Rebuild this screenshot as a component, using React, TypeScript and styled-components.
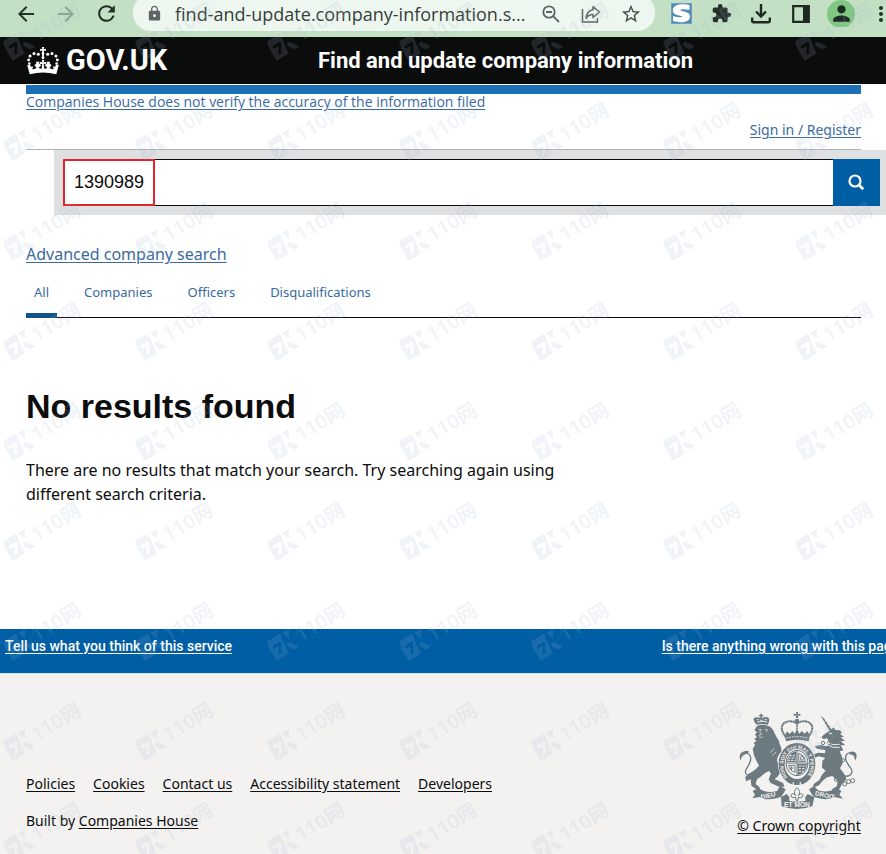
import React from "react";
import styled, { createGlobalStyle } from "styled-components";
import {
  MdArrowBack,
  MdArrowForward,
  MdExtension,
  MdLock,
  MdMoreVert,
  MdPerson,
  MdRefresh,
  MdStarBorder,
} from "react-icons/md";

const GlobalStyle = createGlobalStyle`
  *, *::before, *::after { box-sizing: border-box; }
  body {
    margin: 0;
    background: #ffffff;
    color: #0b0c0c;
    font-family: "Noto Sans", "Open Sans", sans-serif;
  }
`;

const Page = styled.div`
  position: relative;
  display: flex;
  flex-direction: column;
  min-height: 100vh;
  overflow: hidden;
`;

/* Browser toolbar */

const BrowserBar = styled.div`
  display: flex;
  align-items: flex-start;
  height: 37px;
  padding-left: 6px;
  background: #c3e0c4;
  overflow: hidden;
`;

const ToolButton = styled.button<{ $tone?: string }>`
  display: flex;
  flex: none;
  align-items: center;
  justify-content: center;
  width: 40px;
  height: 27px;
  padding: 0;
  border: 0;
  background: none;
  color: ${(p) => p.$tone || "#26302a"};
`;

const AddressBar = styled.div`
  display: flex;
  flex: 1;
  align-items: flex-end;
  height: 37px;
  min-width: 0;
  margin: -6px 6px 0 7px;
  padding: 0 4px 4px 13px;
  border-radius: 18px;
  background: #eef7ef;
`;

const LockIcon = styled.span`
  display: flex;
  align-items: center;
  height: 27px;
  margin-right: 12px;
  color: #5f6368;
`;

const AddressInput = styled.input`
  flex: 1;
  min-width: 0;
  height: 27px;
  padding: 0;
  border: 0;
  outline: 0;
  background: none;
  color: #36403a;
  font: 400 18px "Open Sans", "Noto Sans", sans-serif;
`;

const Extensions = styled.div`
  display: flex;
  flex: none;
  width: 225px;
  overflow: hidden;
`;

const Avatar = styled.span`
  display: flex;
  flex: none;
  align-items: center;
  justify-content: center;
  width: 28px;
  height: 28px;
  border-radius: 50%;
  background: #81c784;
  color: #1d2b22;
`;

/* GOV.UK header */

const GovHeader = styled.header`
  display: flex;
  align-items: center;
  height: 47px;
  padding: 0 26px;
  background: #0b0c0c;
  color: #ffffff;
  font-family: Roboto, sans-serif;
  font-weight: 700;
  white-space: nowrap;
`;

const Brand = styled.a`
  display: flex;
  flex: none;
  align-items: center;
  gap: 6px;
  width: 292px;
  color: inherit;
  font-size: 29px;
  line-height: 47px;
  text-decoration: none;
`;

const ServiceName = styled.a`
  color: inherit;
  font-size: 22px;
  line-height: 47px;
  text-decoration: none;
`;

/* Main content */

const Container = styled.div`
  margin: 0 25px 0 26px;
`;

const AccountBar = styled(Container)`
  margin-top: 1px;
  border-top: 9px solid #1d70b8;
  border-bottom: 1px solid #b1b4b6;
`;

const Link = styled.a`
  color: #3a6a9f;
  text-underline-offset: 2px;
`;

const Notice = styled(Link)`
  display: block;
  font: 400 14px/16px "Open Sans", sans-serif;
`;

const SignIn = styled.div`
  padding: 10px 0 9px;
  font-size: 14px;
  line-height: 20px;
  text-align: right;
`;

const SearchForm = styled.form`
  display: flex;
  margin-left: 54px;
  padding: 9px 6px 9px 9px;
  background: #dee0e2;
`;

const SearchField = styled.div`
  display: grid;
  flex: 1;
`;

const SearchInput = styled.input`
  grid-area: 1 / 1;
  width: 100%;
  height: 47px;
  padding: 0 10px;
  border: 1px solid #0b0c0c;
  border-right: 0;
  border-radius: 0;
  outline: 0;
  background: #ffffff;
  color: #0b0c0c;
  font: 400 18px "Liberation Sans", Arial, sans-serif;
`;

const Highlight = styled.span`
  grid-area: 1 / 1;
  width: 92px;
  border: 2px solid #e0242c;
  pointer-events: none;
`;

const SearchButton = styled.button`
  display: flex;
  align-items: center;
  justify-content: center;
  width: 47px;
  height: 47px;
  padding: 0 2px 2px 0;
  border: 0;
  background: #005ea5;
`;

const Advanced = styled(Link)`
  display: inline-block;
  margin-top: 27px;
  font-size: 16px;
  line-height: 24px;
`;

const Tabs = styled.nav`
  display: flex;
  gap: 19px;
  margin-top: 15px;
  border-bottom: 1px solid #0b0c0c;
`;

const Tab = styled.a<{ $active?: boolean }>`
  margin-bottom: -1px;
  padding: 0 8px 10px;
  border-bottom: 5px solid ${(p) => (p.$active ? "#10548a" : "transparent")};
  color: #3a6a9f;
  font-size: 13px;
  line-height: 22px;
  text-decoration: none;
`;

const Title = styled.h1`
  margin: 68px 0 0;
  font: 700 34px/40px "Liberation Sans", Arial, sans-serif;
`;

const Message = styled.p`
  max-width: 557px;
  margin: 32px 0 123px;
  font-size: 16px;
  line-height: 24px;
`;

/* Feedback strip and footer */

const Feedback = styled.div`
  display: flex;
  justify-content: space-between;
  height: 44px;
  margin-right: -25px;
  padding: 7px 5px;
  background: #005ea5;
`;

const FeedbackLink = styled.a`
  color: #ffffff;
  font: 500 14px/20px Roboto, sans-serif;
  text-underline-offset: 2px;
  white-space: nowrap;
`;

const Footer = styled.footer`
  display: flex;
  flex: 1;
  align-items: flex-start;
  justify-content: space-between;
  padding: 34px 25px 16px 26px;
  border-top: 1px solid #cfe3f0;
  background: #f3f2f1;
  font-size: 14px;
  line-height: 20px;
`;

const FooterLink = styled.a`
  color: #0b0c0c;
  text-underline-offset: 2px;
`;

const FooterNav = styled.nav`
  display: flex;
  gap: 18px;
  margin-top: 66px;
`;

const BuiltBy = styled.p`
  margin: 17px 0 0;
`;

const Copyright = styled.div`
  display: flex;
  flex-direction: column;
  align-items: center;
  gap: 4px;
`;

/* Watermark laid over the whole page */

const WatermarkLayer = styled.div`
  position: absolute;
  inset: -20px -132px 0 -23px;
  display: grid;
  grid-template-columns: repeat(auto-fill, 132px);
  grid-auto-rows: 100px;
  pointer-events: none;
`;

const Mark = styled.span`
  display: flex;
  align-items: center;
  justify-content: center;
  gap: 1px;
  transform: rotate(-31deg);
  color: rgba(160, 182, 204, 0.16);
  font: 600 20px/24px "Noto Sans", "Noto Sans CJK SC", sans-serif;
`;

const footerLinks = ["Policies", "Cookies", "Contact us", "Accessibility statement", "Developers"];
const tabs = ["All", "Companies", "Officers", "Disqualifications"];

function Crown() {
  const side = (
    <g>
      <circle cx="14" cy="46" r="3.6" />
      <circle cx="12" cy="36" r="4" />
      <circle cx="16" cy="25" r="4.2" />
      <circle cx="27" cy="18" r="4.3" />
      <circle cx="39" cy="20" r="4.2" />
      <path d="M8 50 L15 76 Q34 71 52 71 V61 Q43 62 40 58 L47 51 L40 45 L42 41 H32 L34 45 L28 51 L34 58 Q28 64 22 61 L25 54 L18 55 L16 49 Z" />
    </g>
  );
  return (
    <svg width="34" height="28" viewBox="6 0 92 78" fill="#ffffff" aria-hidden="true">
      {side}
      <g transform="translate(104 0) scale(-1 1)">{side}</g>
      <path d="M49 0h6l-1 6 6-1v6l-6-1 1 6a5 5 0 0 1-6 0l1-6-6 1V5l6 1zM48 17h8l-2 9a4 4 0 1 1-4 0zM49 36h6l-1 7 7-2v8l-7-2 2 14h-8l2-14-7 2v-8l7 2z" />
    </svg>
  );
}

function ShareIcon() {
  return (
    <svg width="20" height="20" viewBox="0 0 20 20" fill="none" stroke="#5f6368" strokeWidth="1.5" aria-hidden="true">
      <path d="M1.5 5v13h15v-4" />
      <path d="M12 2.5 18.5 8 12 13.5V10.5C8.5 10.5 6.5 12 5 14.5 5.5 10 7.5 6.5 12 5.8Z" strokeLinejoin="round" />
    </svg>
  );
}

function ZoomOutIcon() {
  return (
    <svg width="18" height="18" viewBox="0 0 18 18" fill="none" stroke="#5f6368" strokeWidth="1.8" aria-hidden="true">
      <circle cx="7" cy="7" r="5.7" />
      <path d="M11.3 11.3 17 17M4 7h6" />
    </svg>
  );
}

function DownloadIcon() {
  return (
    <svg width="20" height="20" viewBox="0 0 20 20" fill="none" stroke="#1f2922" strokeWidth="2.4" aria-hidden="true">
      <path d="M10 0v12M5 7.5l5 5 5-5M1.2 13.5v3.3a1.5 1.5 0 0 0 1.5 1.5h14.6a1.5 1.5 0 0 0 1.5-1.5v-3.3" />
    </svg>
  );
}

function SidePanelIcon() {
  return (
    <svg width="18" height="18" viewBox="0 0 18 18" aria-hidden="true">
      <path d="M1.2 1.2h15.6v15.6H1.2z" fill="none" stroke="#1f2922" strokeWidth="2.2" />
      <path d="M11 1h6v16h-6z" fill="#1f2922" />
    </svg>
  );
}

function StylusIcon() {
  return (
    <svg width="21" height="21" viewBox="0 0 21 21" aria-hidden="true">
      <path d="M.5.5h20v20H.5z" fill="#4d8ab5" stroke="#6f9fc0" />
      <path
        d="M18.500 2v5C14.500 5.900 9.500 5.800 9.500 7.200c0 1.200 9.500.8 9.500 6.200 0 6.800-11 6.500-17 4.600v-5c4.500 1.500 9.300 1.600 9.300.6 0-1.400-9.600-.6-9.600-6.200C1.700.8 12.500.5 18.500 2Z"
        fill="#ffffff"
      />
    </svg>
  );
}

function MarkLogo() {
  return (
    <svg width="29" height="22" viewBox="0 0 29 22" fill="currentColor" fillRule="evenodd" aria-hidden="true">
      <path d="M2 0H17L14 22H0V8ZM4 7v3h5l-4 8h3l5-9V7Z" />
      <path d="M19 1h8l-5 8zM18 12l3 0 6 9h-6l-4-6z" />
    </svg>
  );
}

function RoyalArms() {
  return (
    <svg width="124" height="104" viewBox="0 0 372 312" fill="#6d7a80" role="img" aria-label="Royal coat of arms">
      {/* lion */}
      <path d="M59 50Q46 38 51 30 60 25 73 31 86 24 95 30 100 38 92 50Q76 46 59 50Z" />
      <path d="M70 17h5v4h4v4h-4v5h-5v-5h-4v-4h4Z" />
      <path d="M61 42q15-4 30 0M60 35h5M70 37h6M83 35h6" fill="none" stroke="#f3f2f1" strokeWidth="3" />
      <path d="M60 54Q77 46 94 54 106 58 111 72 115 80 119 88 127 98 128 108 134 118 134 130 121 142 120 158L126 172 131 190 123 205 113 213 124 218 139 226 142 236 126 236 101 225 95 214 102 196 95 189Q80 196 75 203L60 214 56 228 67 237 70 246 57 243 43 233 41 214 27 220 25 207 34 198 44 192 56 184 66 173 58 158 51 142 47 122 54 112 50 104 58 100 52 92 60 88 54 80 60 72 52 67Z" />
      <path d="M64 64l9 1-5 6 6 8-9 3M84 65l7 0-3 6M66 87q7 3 12-1M112 122l-12 12M118 132l-12 10" fill="none" stroke="#f3f2f1" strokeWidth="2" />
      <path d="M62 189Q48 208 32 201 20 196 29 181C40 165 47 151 37 140 29 131 19 136 15 145" fill="none" stroke="#6d7a80" strokeWidth="4" />
      <path d="M15 133q14-9 21-2-5 8-20 8l-5 19q-8-17 4-25Z" />

      {/* unicorn */}
      <path d="M251 23l9 7 30 43-7 4Z" />
      <path d="M256 31l4-3M262 41l5-4M269 51l5-4M276 61l5-4" stroke="#f3f2f1" strokeWidth="2" />
      <path d="M268 75L284 64 290 58 295 66 309 67 315 75 309 77 321 87 311 88 324 99 311 99 325 112 311 112 319 127 308 130Q319 149 317 166L309 181 320 195 329 214 316 226 306 245 295 253 283 253 286 243 299 235 302 221 294 211 286 204 270 208 256 219 246 232 228 239 230 228 247 216 255 200 266 188 255 179 256 158 265 150 246 145 228 151 229 140 243 134 264 136 265 126 240 122 233 115 247 112 270 115 278 103 270 91 260 94 253 88 260 80Z" />
      <path d="M276 77l9-1M270 102q16 12 38 7M269 109q18 13 39 9" fill="none" stroke="#f3f2f1" strokeWidth="3" />
      <path d="M270 106l6-9 5 10 6-8 5 9 7-9 3 10" fill="none" stroke="#6d7a80" strokeWidth="3" />
      <path d="M306 195Q324 210 338 202 351 193 340 179C329 164 320 150 330 138 338 131 349 133 353 144" fill="none" stroke="#6d7a80" strokeWidth="4" />
      <path d="M337 134q13-8 21 3 3 9-3 21l-5-16-12-3Z" />
      <g fill="none" stroke="#6d7a80" strokeWidth="3">
        <circle cx="258" cy="105" r="5" />
        <circle cx="254" cy="118" r="5" />
        <circle cx="318" cy="157" r="5" />
        <circle cx="298" cy="214" r="6" />
        <circle cx="310" cy="222" r="6" />
        <circle cx="323" cy="228" r="6" />
        <circle cx="335" cy="221" r="6" />
        <circle cx="347" cy="218" r="6" />
      </g>

      {/* crown */}
      <path d="M177 12h7l-2 7 8-2v7l-8-2 2 8h-8l2-8-8 2v-7l8 2Z" />
      <path d="M146 86Q124 58 143 44 162 34 180 47 198 34 217 44 236 58 214 86" fill="none" stroke="#6d7a80" strokeWidth="6" strokeDasharray="7 1" />
      <circle cx="180" cy="39" r="7" />
      <path d="M180 44V75" stroke="#6d7a80" strokeWidth="5" strokeDasharray="5 2" />
      <path d="M143 83l7-13 8 8 8-9 7 8 7-13 7 13 7-8 9 8 8-8 7 13-3 18q-34-9-68 0Z" />
      <path d="M149 90q31-8 62 0" fill="none" stroke="#f3f2f1" strokeWidth="3" strokeDasharray="5 3" />

      {/* garter and shield */}
      <ellipse cx="180" cy="168" rx="57" ry="65" fill="#f3f2f1" />
      <ellipse cx="180" cy="168" rx="46" ry="54" fill="none" stroke="#6d7a80" strokeWidth="18" />
      <path id="garter" d="M152 207A41 49 0 1 1 208 207" fill="none" />
      <text fill="#f3f2f1" fontFamily="Liberation Sans" fontWeight="700" fontSize="15">
        <textPath href="#garter">HONI SOIT QUI MAL Y PENSE</textPath>
      </text>
      <ellipse cx="180" cy="165" rx="33" ry="38" fill="#f3f2f1" stroke="#6d7a80" strokeWidth="3" />
      <path d="M178 130Q155 132 150 162H178ZM210 168Q207 195 182 201V168Z" />
      <path d="M157 143h19M154 150h22M152 157h24M186 174h22M185 182h20M185 190h15" stroke="#f3f2f1" strokeWidth="3" strokeDasharray="7 3" />
      <path d="M185 136q17 5 20 24h-20ZM155 172h19v21q-17-5-19-21Z" fill="none" stroke="#6d7a80" strokeWidth="3" />
      <path d="M190 155l3-12 8 6-5 8ZM163 175v13M159 180h11M147 165h66M180 128v74" fill="none" stroke="#6d7a80" strokeWidth="3" />
      <path d="M169 223v8M190 223v8" stroke="#f3f2f1" strokeWidth="4" />

      {/* motto scroll */}
      <path d="M47 249L64 240Q86 258 120 249L129 234 146 244Q141 256 132 267 91 281 68 267L46 271 54 260Z" />
      <path d="M313 249L298 240Q272 257 243 247L231 234 216 244Q222 258 232 267 268 280 292 267L318 272 307 260Z" />
      <path d="M132 267l17-9 8 9 0 12q24 5 48 0v-12l7-9 20 9-6 28q-47 16-92 0Z" />
      <path d="M180 239q13 12 4 23 14-12 14 3-6 8-14 2l-1 10h-6l-1-10q-8 6-14-2 0-15 14-3-9-11 4-23Z" fill="#f3f2f1" stroke="#6d7a80" strokeWidth="3" />
      <g fill="#f3f2f1" fontFamily="Liberation Sans" fontWeight="700" textAnchor="middle">
        <text fontSize="19" transform="translate(95 269) rotate(-13)">DIEU</text>
        <text fontSize="19" transform="translate(262 268) rotate(12)">DROIT</text>
        <text fontSize="20" x="180" y="297">ET MON</text>
      </g>
    </svg>
  );
}

export default function App() {
  return (
    <Page>
      <GlobalStyle />
      <BrowserBar>
        <ToolButton aria-label="Back"><MdArrowBack size={24} /></ToolButton>
        <ToolButton aria-label="Forward" $tone="#8ca58f"><MdArrowForward size={24} /></ToolButton>
        <ToolButton aria-label="Reload"><MdRefresh size={25} /></ToolButton>
        <AddressBar>
          <LockIcon><MdLock size={17} /></LockIcon>
          <AddressInput aria-label="Address" defaultValue="find-and-update.company-information.s..." />
          <ToolButton aria-label="Zoom out"><ZoomOutIcon /></ToolButton>
          <ToolButton aria-label="Share"><ShareIcon /></ToolButton>
          <ToolButton aria-label="Bookmark" $tone="#4a4f4c"><MdStarBorder size={22} /></ToolButton>
        </AddressBar>
        <Extensions>
          <ToolButton aria-label="Stylus"><StylusIcon /></ToolButton>
          <ToolButton aria-label="Extensions"><MdExtension size={21} /></ToolButton>
          <ToolButton aria-label="Downloads"><DownloadIcon /></ToolButton>
          <ToolButton aria-label="Side panel"><SidePanelIcon /></ToolButton>
          <ToolButton aria-label="Profile"><Avatar><MdPerson size={25} /></Avatar></ToolButton>
          <ToolButton aria-label="Menu"><MdMoreVert size={24} /></ToolButton>
        </Extensions>
      </BrowserBar>

      <GovHeader>
        <Brand href="#"><Crown />GOV.UK</Brand>
        <ServiceName href="#">Find and update company information</ServiceName>
      </GovHeader>

      <AccountBar>
        <Notice href="#">Companies House does not verify the accuracy of the information filed</Notice>
        <SignIn><Link href="#">Sign in / Register</Link></SignIn>
      </AccountBar>

      <SearchForm>
        <SearchField>
          <SearchInput aria-label="Search companies" defaultValue="1390989" />
          <Highlight />
        </SearchField>
        <SearchButton type="button" aria-label="Search">
          <svg width="16" height="16" viewBox="0 0 16 16" fill="none" stroke="#ffffff" strokeWidth="2.2" aria-hidden="true">
            <circle cx="7" cy="7" r="5.5" />
            <path d="M11 11l4.2 4.2" strokeWidth="2.8" />
          </svg>
        </SearchButton>
      </SearchForm>

      <Container as="main">
        <Advanced href="#">Advanced company search</Advanced>
        <Tabs aria-label="Result type">
          {tabs.map((label, i) => (
            <Tab key={label} href="#" $active={i === 0}>{label}</Tab>
          ))}
        </Tabs>
        <Title>No results found</Title>
        <Message>
          There are no results that match your search. Try searching again using different search criteria.
        </Message>
      </Container>

      <Feedback>
        <FeedbackLink href="#">Tell us what you think of this service</FeedbackLink>
        <FeedbackLink href="#">Is there anything wrong with this page?</FeedbackLink>
      </Feedback>

      <Footer>
        <div>
          <FooterNav aria-label="Footer">
            {footerLinks.map((label) => (
              <FooterLink key={label} href="#">{label}</FooterLink>
            ))}
          </FooterNav>
          <BuiltBy>Built by <FooterLink href="#">Companies House</FooterLink></BuiltBy>
        </div>
        <Copyright>
          <RoyalArms />
          <FooterLink href="#">© Crown copyright</FooterLink>
        </Copyright>
      </Footer>

      <WatermarkLayer aria-hidden="true">
        {Array.from({ length: 63 }, (_, i) => (
          <Mark key={i}><MarkLogo />110网</Mark>
        ))}
      </WatermarkLayer>
    </Page>
  );
}
